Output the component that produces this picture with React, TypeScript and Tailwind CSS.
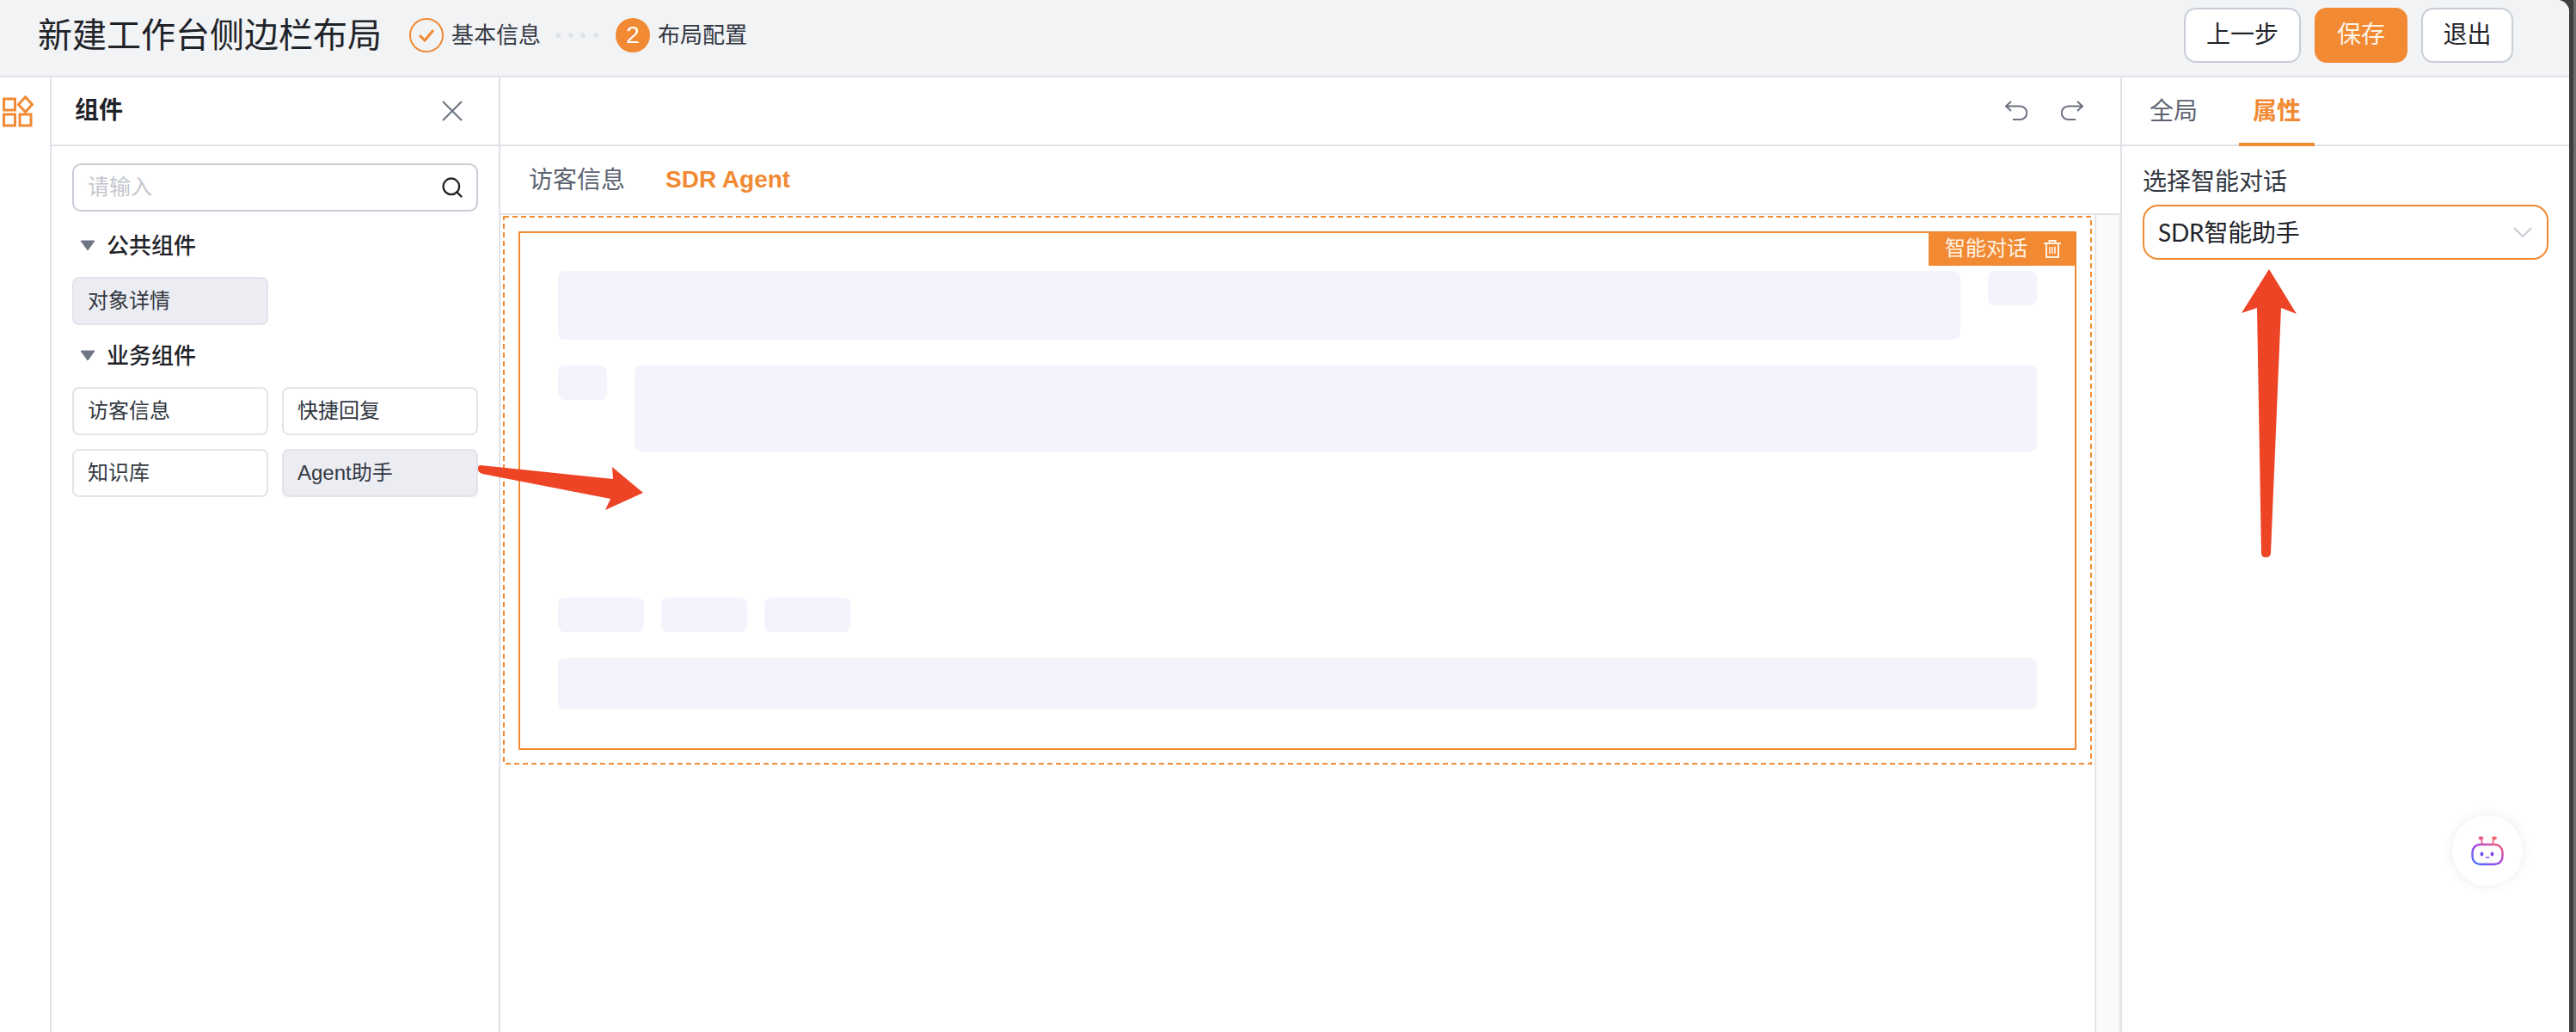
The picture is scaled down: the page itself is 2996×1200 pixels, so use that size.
import { Search } from "lucide-react"

const businessItems = [
  { label: "访客信息", active: false },
  { label: "快捷回复", active: false },
  { label: "知识库", active: false },
  { label: "Agent助手", active: true },
]

function ComponentChip({ label, active }: { label: string; active: boolean }) {
  return (
    <div
      className={`flex h-14 items-center rounded-lg border-2 border-[#e2e4ea] pl-4 text-2xl text-[#333842] ${
        active ? "bg-[#ecedf2]" : "bg-white"
      }`}
    >
      {label}
    </div>
  )
}

function SectionTitle({ title, className }: { title: string; className: string }) {
  return (
    <div className={`flex h-10 items-center gap-[13px] pl-[9px] ${className}`}>
      <svg width="18" height="12" viewBox="0 0 18 12">
        <path d="M1 1h16l-8 11z" fill="#6f7787" stroke="#6f7787" strokeLinejoin="round" />
      </svg>
      <span className="pt-[2px] text-[26px] font-medium text-[#1f2329]">{title}</span>
    </div>
  )
}

function Sidebar() {
  return (
    <div className="flex w-[522px] shrink-0 flex-col border-r-2 border-[#dfe2e8]">
      <div className="flex h-[80px] shrink-0 items-center justify-between border-b-2 border-[#dfe2e8] pl-[27px] pr-[41px]">
        <span className="text-[28px] font-bold text-[#1f2329]">组件</span>
        <svg width="26" height="26" viewBox="0 0 26 26" fill="none" stroke="#6b7280" strokeWidth="2">
          <path d="M2 2l22 22M24 2L2 24" />
        </svg>
      </div>
      <div className="flex flex-col px-6 pt-5">
        <div className="flex h-14 items-center justify-between rounded-[10px] border-2 border-[#c9cdd6] pl-4 pr-[14px]">
          <span className="text-[25px] text-[#c4c7ce]">请输入</span>
          <Search size={28} strokeWidth={2} className="text-[#1f2329]" />
        </div>
        <SectionTitle title="公共组件" className="mt-[19px]" />
        <div className="mt-[17px] grid grid-cols-2 gap-4">
          <ComponentChip label="对象详情" active />
        </div>
        <SectionTitle title="业务组件" className="mt-[15px]" />
        <div className="mt-[17px] grid grid-cols-2 gap-4">
          {businessItems.map((item) => (
            <ComponentChip key={item.label} label={item.label} active={item.active} />
          ))}
        </div>
      </div>
    </div>
  )
}

function Canvas() {
  return (
    <div className="flex min-w-0 flex-1 flex-col">
      <div className="flex h-[80px] shrink-0 items-center justify-end gap-[39px] border-b-2 border-[#dfe2e8] pr-[43px]">
        <svg width="26" height="24" viewBox="0 0 26 24" fill="none" stroke="#6b7280" strokeWidth="2">
          <path d="M7 1L1 6.5L7 12M1 6.5H17.5A7.5 7.5 0 0 1 17.5 22H9" />
        </svg>
        <svg width="26" height="24" viewBox="0 0 26 24" fill="none" stroke="#6b7280" strokeWidth="2">
          <path d="M19 1L25 6.5L19 12M25 6.5H8.5A7.5 7.5 0 0 0 8.5 22H17" />
        </svg>
      </div>
      <div className="flex h-[80px] shrink-0 items-center gap-[47px] border-b-2 border-[#dfe2e8] pl-[33px] text-[28px]">
        <span className="pt-[2px] text-[#5c6370]">访客信息</span>
        <span className="font-bold text-[#f18a33]">SDR Agent</span>
      </div>
      <div className="flex min-h-0 flex-1">
        <div className="min-w-0 flex-1 pl-[3px] pr-[3px] pt-px">
          <div className="relative border-2 border-transparent p-4">
            <svg className="absolute -left-[2px] -top-[2px]" width="1848" height="638" viewBox="0 0 1848 638" fill="none">
              <rect x="1" y="1" width="1846" height="636" stroke="#f18a33" strokeWidth="2" strokeDasharray="6 4" />
            </svg>
            <div className="relative border-2 border-[#f18a33] px-[44px] pb-[45px] pt-[44px]">
              <div className="absolute -right-[2px] -top-[2px] flex h-10 w-[172px] items-center gap-[19px] bg-[#f18a33] pl-[19px] text-2xl text-[#fff3e6]">
                <span>智能对话</span>
                <svg width="20" height="21" viewBox="0 0 20 21" fill="none" stroke="#fff3e6" strokeWidth="2">
                  <path d="M0 4h20M6.5 4V1h7v3M3 4v16h14V4" />
                  <path d="M7 8v8M10 8v8M13 8v8" strokeWidth="1.6" />
                </svg>
              </div>
              <div className="flex gap-8">
                <div className="h-20 flex-1 rounded-lg bg-[#f2f3fb]" />
                <div className="h-10 w-[57px] rounded-lg bg-[#f2f3fb]" />
              </div>
              <div className="mt-[30px] flex gap-8">
                <div className="h-10 w-[57px] rounded-lg bg-[#f2f3fb]" />
                <div className="h-[100px] flex-1 rounded-lg bg-[#f2f3fb]" />
              </div>
              <div className="mt-[170px] flex gap-5">
                <div className="h-10 w-[100px] rounded-lg bg-[#f2f3fb]" />
                <div className="h-10 w-[100px] rounded-lg bg-[#f2f3fb]" />
                <div className="h-10 w-[100px] rounded-lg bg-[#f2f3fb]" />
              </div>
              <div className="mt-[30px] h-[60px] rounded-lg bg-[#f2f3fb]" />
            </div>
          </div>
        </div>
        <div className="w-[30px] shrink-0 border-l-2 border-r-2 border-l-[#e6e6e6] border-r-[#ececec] bg-[#fafafa]" />
      </div>
    </div>
  )
}

function PropertyPanel() {
  return (
    <div className="relative flex w-[522px] shrink-0 flex-col border-l-2 border-[#dfe2e8]">
      <div className="flex h-[80px] shrink-0 gap-8 border-b-2 border-[#dfe2e8] pl-4 text-[28px]">
        <div className="flex h-[80px] w-[88px] items-center justify-center text-[#5c6370]">全局</div>
        <div className="flex h-[80px] w-[88px] items-center justify-center border-y-4 border-t-transparent border-b-[#f18a33] font-bold text-[#f18a33]">
          属性
        </div>
      </div>
      <div className="flex flex-col px-6 pt-[22px]">
        <div className="h-10 text-[28px] leading-10 text-[#333842]">选择智能对话</div>
        <div className="mt-[6px] flex h-16 items-center justify-between rounded-[18px] border-2 border-[#f18a33] pl-4 pr-[17px] font-['Lato','Noto_Sans_CJK_SC',sans-serif] text-[28px] tracking-[-0.2px] text-[#1f2329]">
          <span>SDR智能助手</span>
          <svg width="22" height="12" viewBox="0 0 22 12" fill="none" stroke="#c9ccd4" strokeWidth="2">
            <path d="M1 1l10 10L21 1" />
          </svg>
        </div>
      </div>
      <div className="absolute left-[384px] top-[858px] flex h-[82px] w-[82px] items-center justify-center rounded-full bg-white shadow-[0_0_14px_rgba(0,0,0,0.08)]">
        <svg width="38" height="36" viewBox="0 0 38 36" fill="none">
          <defs>
            <linearGradient id="botBody" x1="0" y1="1" x2="1" y2="0">
              <stop offset="0" stopColor="#3f7bff" />
              <stop offset="0.5" stopColor="#a33de8" />
              <stop offset="1" stopColor="#f2606e" />
            </linearGradient>
          </defs>
          <rect x="1.5" y="11" width="35" height="23" rx="9" stroke="url(#botBody)" strokeWidth="2.4" />
          <path d="M12 5l1 6M26 5l-1 6" stroke="#ea5a8c" strokeWidth="1.6" />
          <ellipse cx="11.5" cy="3.6" rx="2.8" ry="2" fill="#e8588f" />
          <ellipse cx="27" cy="3.6" rx="2.8" ry="2" fill="#f2666e" />
          <ellipse cx="12.5" cy="22" rx="1.9" ry="2.5" fill="#6d4cf5" />
          <ellipse cx="24.5" cy="22" rx="1.9" ry="2.5" fill="#7a45f0" />
          <path d="M17 25.5c1 1 3 1 4 0" stroke="#6d4cf5" strokeWidth="1.4" />
        </svg>
      </div>
    </div>
  )
}

export default function App() {
  return (
    <div className="relative flex h-[1200px] w-[2996px] overflow-hidden bg-[#3f3f3f] font-['Liberation_Sans','Noto_Sans_CJK_SC',sans-serif]">
      <div className="flex w-[2988px] shrink-0 flex-col overflow-hidden rounded-tr-[14px] bg-white">
        <header className="flex h-[90px] shrink-0 items-center justify-between border-b-2 border-[#dfe2e8] bg-[#f1f3f5] pb-[6px] pl-[44px] pr-[65px]">
          <div className="flex items-center">
            <h1 className="w-[400px] text-[40px] font-normal text-[#1f2329]">新建工作台侧边栏布局</h1>
            <div className="ml-8 flex h-10 w-10 items-center justify-center rounded-full border-2 border-[#f18a33]">
              <svg width="20" height="16" viewBox="0 0 20 16" fill="none" stroke="#f18a33" strokeWidth="3">
                <path d="M2 8l6 6L18 2" />
              </svg>
            </div>
            <span className="ml-[9px] text-[26px] text-[#333842]">基本信息</span>
            <div className="ml-[17px] flex w-[50px] justify-between">
              <span className="h-[6px] w-[6px] rounded-full bg-[#dfe2e8]" />
              <span className="h-[6px] w-[6px] rounded-full bg-[#dfe2e8]" />
              <span className="h-[6px] w-[6px] rounded-full bg-[#dfe2e8]" />
              <span className="h-[6px] w-[6px] rounded-full bg-[#dfe2e8]" />
            </div>
            <div className="ml-[20px] flex h-10 w-10 items-center justify-center rounded-full bg-[#f18a33] text-[28px] text-white">
              2
            </div>
            <span className="ml-[9px] text-[26px] text-[#333842]">布局配置</span>
          </div>
          <div className="flex items-center gap-4 text-[28px]">
            <button className="h-16 w-[136px] rounded-[14px] border-2 border-[#c9cdd6] bg-white text-[#1f2329]">上一步</button>
            <button className="h-16 w-[108px] rounded-[14px] bg-[#f18a33] text-[#fff3e6]">保存</button>
            <button className="h-16 w-[107px] rounded-[14px] border-2 border-[#c9cdd6] bg-white text-[#1f2329]">退出</button>
          </div>
        </header>
        <div className="flex min-h-0 flex-1">
          <div className="flex w-[60px] shrink-0 justify-start border-r-2 border-[#dfe2e8] pl-[3px] pt-[21px]">
            <svg width="36" height="37" viewBox="0 0 36 37" fill="none" stroke="#f18a33" strokeWidth="3">
              <rect x="1.5" y="4" width="13" height="13" />
              <path d="M26.5 1.8L34.5 10.5L26.5 19.2L18.5 10.5z" />
              <rect x="1.5" y="22" width="13" height="13" />
              <rect x="20" y="22" width="13" height="13" />
            </svg>
          </div>
          <Sidebar />
          <Canvas />
          <PropertyPanel />
        </div>
      </div>
      <div className="w-[5px] shrink-0 bg-[#3f3f3f]" />
      <div className="flex-1 bg-[#6e6e6e]" />
      <svg className="pointer-events-none absolute inset-0" width="2996" height="1200" viewBox="0 0 2996 1200">
        <path
          d="M559 541L713 557L712 543L748 573L704 593L710 580L561 551Q555 549 556 544Q556 541 559 541z"
          fill="#ee4426"
        />
        <path
          d="M2639 313L2607 364L2625 358L2630 643Q2630 648 2635 648Q2641 648 2641 643L2653 358L2671 365z"
          fill="#ee4426"
        />
      </svg>
    </div>
  )
}
